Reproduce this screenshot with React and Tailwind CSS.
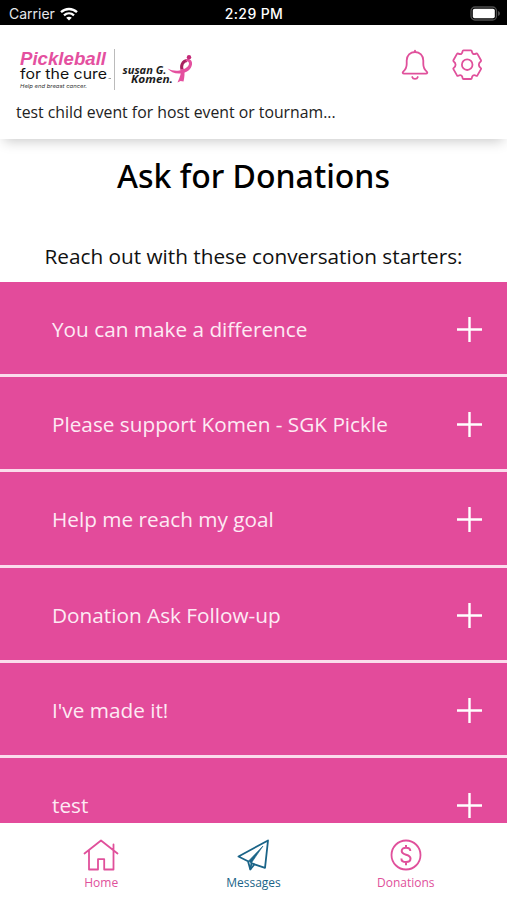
import React, { useState } from 'react';

const starters = [
  'You can make a difference',
  'Please support Komen - SGK Pickle',
  'Help me reach my goal',
  'Donation Ask Follow-up',
  "I've made it!",
  'test',
];

const tabs = [
  { name: 'Home', Icon: HomeIcon },
  { name: 'Messages', Icon: PlaneIcon },
  { name: 'Donations', Icon: DollarIcon },
];

function WifiIcon() {
  return (
    <svg width="18" height="14" viewBox="0 0 18 14" fill="none" stroke="#fff" strokeWidth="2.3">
      <path d="M1 5.2C5.5.9 12.5.9 17 5.2" />
      <path d="M4 8.3c2.9-2.6 7.1-2.6 10 0" />
      <path d="M9 13.6 6.2 10.7c1.6-1.4 4-1.4 5.6 0Z" fill="#fff" stroke="none" />
    </svg>
  );
}

function BatteryIcon() {
  return (
    <svg width="31" height="15" viewBox="0 0 31 15">
      <rect x="1" y="1" width="25.5" height="13" rx="4" fill="none" stroke="#4d4d4d" strokeWidth="1.3" />
      <rect x="2.8" y="2.8" width="22" height="9.4" rx="1.8" fill="#fff" />
      <path d="M28 5v5c1.2-.5 2-1.4 2-2.5s-.8-2-2-2.5Z" fill="#4d4d4d" />
    </svg>
  );
}

function Logo() {
  return (
    <svg width="180" height="44" viewBox="0 0 180 44" fontFamily="'Open Sans', sans-serif">
      <text x="4" y="18" fontFamily="'Liberation Sans', sans-serif" fontSize="18" fontWeight="700" fontStyle="italic" fill="#e4509f" textLength="86" lengthAdjust="spacingAndGlyphs">Pickleball</text>
      <text x="4" y="32" fontFamily="Inter, sans-serif" fontSize="14" fontWeight="400" fill="#111" textLength="87" lengthAdjust="spacingAndGlyphs">for the cure</text>
      <path d="M92.5 31.5h2.5" stroke="#888" strokeWidth=".8" />
      <text x="4" y="40.5" fontFamily="Inter, sans-serif" fontSize="5.2" fontWeight="400" fontStyle="italic" fill="#333" textLength="67" lengthAdjust="spacingAndGlyphs">Help end breast cancer.</text>
      <path d="M98.5 2v41" stroke="#bbb" strokeWidth="1" />
      <text x="106.5" y="26.5" fontSize="11" fontWeight="700" fontStyle="italic" fill="#1c1c1c" textLength="44" lengthAdjust="spacingAndGlyphs">susan G.</text>
      <text x="115" y="35.5" fontSize="11" fontWeight="700" fontStyle="italic" fill="#1c1c1c" textLength="42" lengthAdjust="spacingAndGlyphs">Komen.</text>
      {/* Ribbon */}
      <path d="M171 13.5c-4 .5-7 5-4.5 10.5" fill="none" stroke="#a8215f" strokeWidth="3" />
      <path d="M165 22c.5 3.5-1 8-3.5 13.5l3-1.500 3 .5c1-4.500 1.500-9 .5-12.500Z" fill="#e4509f" />
      <path d="M151.5 21.5c4 2 8 2.700 12 2 5-1 9-3.500 9.500-6.500 0-2-1-3-3.500-2.500l1-2.500c4-.5 6 2 5.500 5.500-.8 5-5.500 8.500-11.500 9-5.500.5-10-1.500-13-5Z" fill="#e4509f" />
      <circle cx="173" cy="10.3" r="2.2" fill="#c42a78" />
    </svg>
  );
}

function BellIcon() {
  return (
    <svg width="28" height="32" viewBox="0 0 28 32" fill="none" stroke="#e0509b" strokeWidth="1.8" strokeLinecap="round" strokeLinejoin="round">
      <path d="M14 1.600v1.400M14 3c-4.800 0-8.300 3.700-8.300 8.500v3.500c0 3.700-1.400 5.800-3.500 7.600-1 .9-.5 2 .8 2h22c1.300 0 1.800-1.100.8-2-2.100-1.800-3.500-3.900-3.500-7.600v-3.500C22.300 6.700 18.800 3 14 3Z" />
      <path d="M11.200 28c.8 2.500 4.800 2.500 5.600 0" />
    </svg>
  );
}

function GearIcon() {
  return (
    <svg width="32" height="32" viewBox="0 0 32 32" fill="none" stroke="#e0509b" strokeWidth="1.8" strokeLinejoin="round">
      <path d="M12.500 1.300h7.400q.8 0 .9.800c.2 2.800 1.800 3.800 4.300 2.500q.8-.4 1.300.3l3.600 6.300q.4.7-.3 1.200c-2.500 1.700-2.500 5 0 6.500q.7.500.3 1.200l-3.600 6.300q-.5.700-1.300.3c-2.500-1.300-4.100-.3-4.300 2.500q-.1.800-.9.800h-7.400q-.8 0-.9-.8c-.2-2.800-1.800-3.800-4.300-2.500q-.8.400-1.300-.3l-3.600-6.300q-.4-.7.300-1.200c2.500-1.500 2.500-4.800 0-6.500q-.7-.5-.3-1.200L6 4.900q.5-.7 1.300-.3c2.500 1.300 4.100.3 4.300-2.500q.1-.8.900-.8Z" />
      <circle cx="16.200" cy="15.700" r="5.300" />
    </svg>
  );
}

function HomeIcon() {
  return (
    <svg width="36" height="34" viewBox="0 0 36 34" fill="none" stroke="currentColor" strokeWidth="1.8" strokeLinecap="round" strokeLinejoin="round">
      <path d="M1.500 15.500 18 2.500l16.500 13M6 12.500v19h9V21.200h6.200v10.300h9.300v-19M30.500 12V6.500" />
    </svg>
  );
}

function PlaneIcon() {
  return (
    <svg width="36" height="34" viewBox="0 0 36 34" fill="none" stroke="currentColor" strokeWidth="1.8" strokeLinejoin="round">
      <path d="M33 2.500 3.500 18.500l9.500 4.800 2.300 8.200 4.200-5.200 10.500 3.500Z" />
      <path d="M28 8 13.500 23l2.700 2.200Z" fill="currentColor" strokeWidth=".6" />
      <path d="m15.300 31.500 1.200-6.300 3 1.100" />
    </svg>
  );
}

function DollarIcon() {
  return (
    <svg width="36" height="34" viewBox="0 0 36 34" fill="none" stroke="currentColor" strokeWidth="1.8">
      <circle cx="18" cy="17" r="14.500" />
      <path d="M22.300 13c0-2-1.700-3.300-4.300-3.300-2.500 0-4.300 1.200-4.300 3.300 0 5 8.800 2.500 8.800 7.600 0 2.200-1.900 3.500-4.500 3.500s-4.600-1.300-4.600-3.600M18 7v2.700M18 24v3.200" strokeWidth="2" />
    </svg>
  );
}

function App() {
  const [activeTab, setActiveTab] = useState('Messages');

  return (
    <div className="flex h-[900px] w-full flex-col overflow-hidden bg-white font-['Open_Sans',sans-serif] text-black">
      {/* Status bar */}
      <div className="grid h-[25px] shrink-0 grid-cols-3 items-center bg-black pl-[7px] pr-[6px] pt-[2px] font-['Inter',sans-serif] leading-none text-white">
        <div className="flex items-center gap-[5px] pl-[2px] text-gray-200">
          <span className="text-[14px]">Carrier</span>
          <WifiIcon />
        </div>
        <span className="text-center text-[14px] font-medium tracking-[0.4px]">2:29 PM</span>
        <div className="flex justify-end">
          <BatteryIcon />
        </div>
      </div>

      {/* Header */}
      <header className="z-10 h-[114px] shrink-0 bg-white pl-4 pr-6 pt-[22px] shadow-[0_6px_12px_-4px_rgba(0,0,0,0.22)]">
        <div className="flex h-[44px] justify-between">
          <Logo />
          <div className="flex items-center gap-[22px] pb-[8px]">
            <button><BellIcon /></button>
            <button><GearIcon /></button>
          </div>
        </div>
        <p className="mt-[9px] w-[330px] whitespace-nowrap text-[15.8px] leading-6 text-[#222]">
          test child event for host event or tournam...
        </p>
      </header>

      <main className="flex min-h-0 flex-1 flex-col overflow-hidden">
        <h1 className="mt-[15px] text-center font-['Noto_Sans',sans-serif] text-[32px] font-medium leading-[44px]">Ask for Donations</h1>
        <p className="mb-[10px] mt-[43px] text-center text-[20.75px] leading-[31px] text-[#111]">
          Reach out with these conversation starters:
        </p>
        <div>
          {starters.map((starter) => (
            <button
              key={starter}
              className="flex h-[95.2px] w-full items-center justify-between border-b-[3px] border-[#fbdcec] bg-[#e34b9b] pl-[52px] pr-[25px] pt-[3px] text-left text-[20.75px] text-[#fdeaf4]"
            >
              <span>{starter}</span>
              <svg width="25" height="25" viewBox="0 0 25 25" stroke="#fff" strokeWidth="2.4">
                <path d="M12.500 0v25M0 12.500h25" />
              </svg>
            </button>
          ))}
        </div>
      </main>

      {/* Bottom tabs */}
      <nav className="grid h-[77px] shrink-0 grid-cols-3 bg-white px-[25px] pt-[15px]">
        {tabs.map(({ name, Icon }) => (
          <button
            key={name}
            onClick={() => setActiveTab(name)}
            className={`flex flex-col items-center text-[12px] leading-[21px] ${activeTab === name ? 'text-[#1a6488]' : 'text-[#e0509b]'}`}
          >
            <Icon />
            <span>{name}</span>
          </button>
        ))}
      </nav>
    </div>
  );
}

export default App;
